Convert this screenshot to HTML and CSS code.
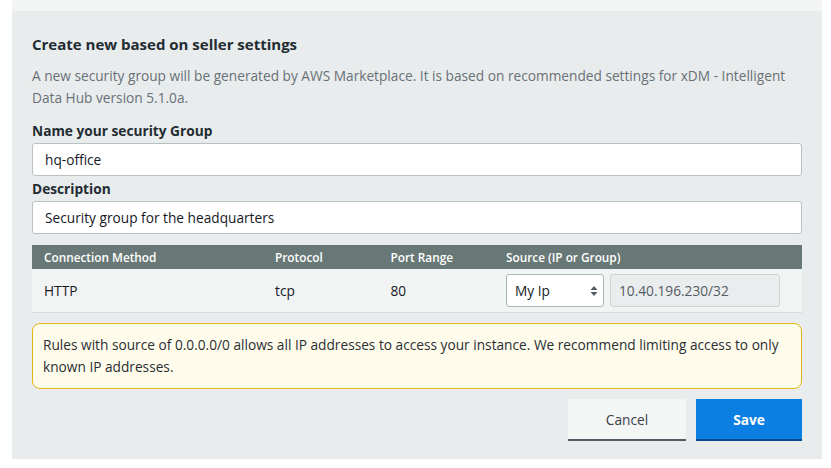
FILE: index.html
```html
<!DOCTYPE html>
<html>
<head>
<meta charset="utf-8">
<link rel="stylesheet" href="styles.css">
</head>
<body>
<div class="wrap">
  <div class="strip"></div>
  <section class="panel">
    <h2 class="title">Create new based on seller settings</h2>
    <p class="desc">A new security group will be generated by AWS Marketplace. It is based on recommended settings for xDM - Intelligent Data Hub version 5.1.0a.</p>
    <label class="label">Name your security Group</label>
    <div class="input">hq-office</div>
    <label class="label">Description</label>
    <div class="input">Security group for the headquarters</div>
    <div class="table">
      <div class="thead">
        <div class="cell">Connection Method</div>
        <div class="cell">Protocol</div>
        <div class="cell">Port Range</div>
        <div class="cell">Source (IP or Group)</div>
      </div>
      <div class="trow">
        <div class="cell">HTTP</div>
        <div class="cell">tcp</div>
        <div class="cell">80</div>
        <div class="cell source">
          <div class="select">
            <span>My Ip</span>
            <svg class="arrows" width="8" height="12" viewBox="0 0 8 12"><path d="M4 1 L7.5 5 L0.5 5 Z M4 11 L7.5 7 L0.5 7 Z" fill="#545b64"/></svg>
          </div>
          <div class="ip">10.40.196.230/32</div>
        </div>
      </div>
    </div>
    <div class="alert">Rules with source of 0.0.0.0/0 allows all IP addresses to access your instance. We recommend limiting access to only known IP addresses.</div>
    <div class="actions">
      <button class="btn cancel">Cancel</button>
      <button class="btn save">Save</button>
    </div>
  </section>
</div>
</body>
</html>
```
FILE: styles.css
```css
* { box-sizing: border-box; }
html, body { margin: 0; padding: 0; background: #ffffff; }
body {
  font-family: "Open Sans", "Liberation Sans", sans-serif;
  font-size: 13.7px;
  color: #16191f;
}
.wrap { margin: 0 9px 0 12px; }
.strip { height: 11px; background: #f3f4f4; }
.panel {
  background: #e9ecec;
  padding: 20px 20px 18px 20px;
  display: flex;
  flex-direction: column;
}
.title {
  margin: 0;
  font-size: 15px;
  line-height: 26px;
  font-weight: 700;
  color: #232b33;
}
.desc {
  margin: 8px 0 0 0;
  line-height: 22px;
  color: #687078;
}
.label {
  display: block;
  font-weight: 700;
  line-height: 22px;
  margin-top: 2px;
  color: #232b33;
}
.desc + .label { margin-top: 11px; }
.label + .input { margin-top: 1px; }
.input {
  height: 33px;
  background: #fff;
  border: 1px solid #b9c2c3;
  border-radius: 3px;
  padding: 0 12px;
  display: flex;
  align-items: center;
  color: #16191f;
}
.table { margin-top: 11px; }
.thead, .trow {
  display: grid;
  grid-template-columns: 30% 15% 15% 40%;
}
.thead {
  background: #687876;
  color: #fff;
  height: 24px;
  font-size: 11.8px;
  font-weight: 600;
}
.thead .cell { display: flex; align-items: center; padding: 0 12px; }
.trow {
  background: #f2f3f3;
  height: 44px;
  border-bottom: 1px solid #d5dbdb;
}
.trow .cell { display: flex; align-items: center; padding: 0 12px; }
.source { gap: 6px; }
.select {
  width: 98px;
  height: 33px;
  background: #fff;
  border: 1px solid #aab7b8;
  border-radius: 3px;
  display: flex;
  align-items: center;
  justify-content: space-between;
  padding: 0 5px 0 8px;
}
.ip {
  width: 170px;
  height: 33px;
  background: #eaeded;
  border: 1px solid #cdd3d3;
  border-radius: 3px;
  display: flex;
  align-items: center;
  padding: 0 8px;
  color: #545b64;
}
.alert {
  margin-top: 10px;
  background: #fffcec;
  border: 1px solid #e2b714;
  border-radius: 8px;
  padding: 10px 10px;
  line-height: 22px;
  color: #2a2e33;
}
.actions {
  margin-top: 10px;
  display: flex;
  justify-content: flex-end;
  gap: 10px;
}
.btn {
  font-family: inherit;
  font-size: 13.7px;
  height: 42px;
  border: 0;
  padding: 0;
  cursor: pointer;
}
.cancel {
  width: 118px;
  background: #f4f5f5;
  border-bottom: 2px solid #545b64;
  color: #3a3f45;
}
.save {
  width: 106px;
  background: #0c7fe2;
  border-bottom: 2px solid #0a4a8f;
  color: #fff;
  font-weight: 700;
}
```
